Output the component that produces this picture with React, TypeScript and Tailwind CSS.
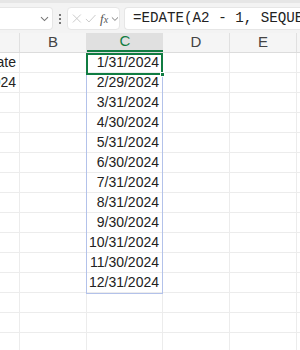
import React from "react";

const dates = [
  "1/31/2024","2/29/2024","3/31/2024","4/30/2024","5/31/2024","6/30/2024",
  "7/31/2024","8/31/2024","9/30/2024","10/31/2024","11/30/2024","12/31/2024",
];

const colA = ["ate", "024"];

function Chevron() {
  return (
    <svg width="9" height="6" viewBox="0 0 9 6" fill="none">
      <path d="M1 1.2 L4.5 4.6 L8 1.2" stroke="#777" strokeWidth="1.1" />
    </svg>
  );
}

export default function App() {
  const rows = Array.from({ length: 15 }, (_, i) => i);
  return (
    <div
      className="relative w-[300px] h-[350px] overflow-hidden bg-white"
      style={{ fontFamily: '"Liberation Sans", Arial, sans-serif' }}
    >
      {/* toolbar */}
      <div className="h-[33px] bg-[#f3f3f3] border-t-[3px] border-[#e6e6e6] flex items-start pt-[4px] pl-0">
        <div className="w-[53px] h-[23px] bg-white rounded-r-[4px] border border-l-0 border-[#e6e6e6] flex items-center justify-end pr-[3px]">
          <Chevron />
        </div>
        <div className="w-[14px] h-[23px] flex flex-col items-center justify-center gap-[2px]">
          <div className="w-[2px] h-[2px] bg-[#777]" />
          <div className="w-[2px] h-[2px] bg-[#777]" />
          <div className="w-[2px] h-[2px] bg-[#777]" />
        </div>
        <div className="w-[53px] h-[23px] bg-white rounded-[4px] border border-[#e6e6e6] flex items-center pl-[4px] gap-[3px]">
          <svg width="11" height="11" viewBox="0 0 11 11">
            <path d="M1 1 L10 10 M10 1 L1 10" stroke="#c4c4c4" strokeWidth="1" />
          </svg>
          <svg width="13" height="11" viewBox="0 0 13 11">
            <path d="M1 6 L4.5 9.5 L12 1.5" stroke="#c4c4c4" strokeWidth="1" fill="none" />
          </svg>
          <span
            className="text-[13px] italic text-[#555] leading-none ml-[1px]"
            style={{ fontFamily: '"Liberation Serif", "Times New Roman", serif' }}
          >
            f<span className="text-[10px]">x</span>
          </span>
          <Chevron />
        </div>
        <div className="ml-[4px] flex-1 h-[23px] bg-white rounded-l-[4px] border border-r-0 border-[#e6e6e6] flex items-center pl-[8px] overflow-hidden">
          <span
            className="text-[14.2px] text-[#222] whitespace-nowrap"
            style={{ fontFamily: '"Liberation Mono", "DejaVu Sans Mono", monospace' }}
          >
            =EDATE(A2 - 1, SEQUENCE(12))
          </span>
        </div>
      </div>

      {/* column headers */}
      <div className="flex h-[20px] bg-[#f5f5f5] border-b border-[#dcdcdc] text-[15px] text-[#444]">
        <div className="w-[20px] shrink-0 border-r border-[#e0e0e0]" />
        <div className="w-[67px] shrink-0 border-r border-[#e0e0e0] flex items-center justify-center">B</div>
        <div className="w-[76px] shrink-0 bg-[#e0e0e0] border-b-2 border-[#107c41] text-[#107c41] flex items-center justify-center">C</div>
        <div className="w-[67px] shrink-0 border-r border-[#e0e0e0] flex items-center justify-center">D</div>
        <div className="w-[67px] shrink-0 border-r border-[#e0e0e0] flex items-center justify-center">E</div>
        <div className="flex-1" />
      </div>

      {/* rows */}
      {rows.map((i) => (
        <div key={i} className="flex h-[20px] border-b border-[#ececec] text-[14px] text-[#222]">
          <div className="w-[20px] shrink-0 border-r border-[#ececec] flex items-center justify-end pr-[3px] overflow-hidden whitespace-nowrap">
            {colA[i] ?? ""}
          </div>
          <div className="w-[67px] shrink-0 border-r border-[#ececec]" />
          <div className="w-[76px] shrink-0 border-r border-[#ececec] flex items-center justify-end pr-[3px]">
            {dates[i] ?? ""}
          </div>
          <div className="w-[67px] shrink-0 border-r border-[#ececec]" />
          <div className="w-[67px] shrink-0 border-r border-[#ececec]" />
          <div className="flex-1" />
        </div>
      ))}

      {/* spill range border */}
      <div className="absolute left-[86px] top-[53px] w-[77px] h-[241px] border border-[#b3c2ea] pointer-events-none" />
      {/* active cell */}
      <div className="absolute left-[86px] top-[53px] w-[77px] h-[22px] border-2 border-[#107c41] pointer-events-none" />
      <div className="absolute left-[160px] top-[72px] w-[5px] h-[5px] bg-[#107c41] border border-white pointer-events-none" />
    </div>
  );
}
